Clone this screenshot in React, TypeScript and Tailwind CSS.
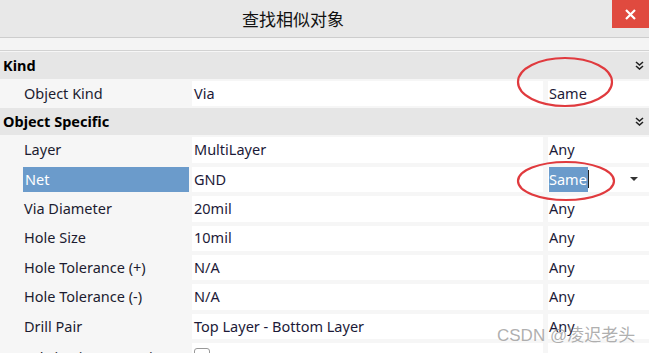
import React from "react";

type Row = { label: string; value: string; match: string; selected?: boolean };

const kindRows: Row[] = [{ label: "Object Kind", value: "Via", match: "Same" }];

const specificRows: Row[] = [
  { label: "Layer", value: "MultiLayer", match: "Any" },
  { label: "Net", value: "GND", match: "Same", selected: true },
  { label: "Via Diameter", value: "20mil", match: "Any" },
  { label: "Hole Size", value: "10mil", match: "Any" },
  { label: "Hole Tolerance (+)", value: "N/A", match: "Any" },
  { label: "Hole Tolerance (-)", value: "N/A", match: "Any" },
  { label: "Drill Pair", value: "Top Layer - Bottom Layer", match: "Any" },
];

const Chevrons = () => (
  <svg width="9" height="9" viewBox="0 0 9 9" className="text-[#222]">
    <path d="M1 1 L4.5 4 L8 1 M1 5 L4.5 8 L8 5" fill="none" stroke="currentColor" strokeWidth="1.6" />
  </svg>
);

const Header = ({ title }: { title: string }) => (
  <div className="flex h-[27px] items-center justify-between bg-[#e6e6e6] pl-[3px] pr-[5px]">
    <span className="text-[14.5px] font-bold text-black">{title}</span>
    <Chevrons />
  </div>
);

const PropRow = ({ row }: { row: Row }) => (
  <div className="flex h-[29.4px] items-stretch py-[2px]">
    <div className="flex w-[192px] items-center pl-[23px] pr-[3px]">
      {row.selected ? (
        <div className="flex h-full w-full items-center bg-[#6b9bcb] pl-[2px] text-white">{row.label}</div>
      ) : (
        <span className="pl-[1px] text-[#1c1c30]">{row.label}</span>
      )}
    </div>
    <div className="flex w-[351px] items-center bg-white pl-[2px] text-[#1c1a38]">{row.value}</div>
    <div className="ml-[5px] flex flex-1 items-center bg-white pl-[1px] text-[#1c1a38]">
      {row.selected ? (
        <>
          <span className="flex h-full items-center bg-[#6b9bcb] pr-[1px] text-white">{row.match}</span>
          <span className="h-[18px] w-[1px] bg-[#222]" />
          <svg width="10" height="6" viewBox="0 0 10 6" className="ml-auto mr-[10px]">
            <path d="M1 1 L9 1 L5 5 Z" fill="#333" />
          </svg>
        </>
      ) : (
        <span>{row.match}</span>
      )}
    </div>
  </div>
);

export default function App() {
  return (
    <div
      className="relative h-[353px] w-[649px] overflow-hidden bg-[#f6f6f6] text-[14.5px]"
      style={{ fontFamily: '"Noto Sans", "Noto Sans CJK SC", sans-serif' }}
    >
      {/* title bar */}
      <div className="relative flex h-[38px] items-center border-b border-[#cdcdcd] bg-[#e8e8e8] pl-[242px]">
        <span className="text-[17px] text-[#111]" style={{ fontFamily: '"Noto Sans CJK SC", sans-serif' }}>
          查找相似对象
        </span>
        <div className="absolute right-0 top-0 flex h-[28px] w-[37px] items-center justify-center bg-[#e04a3f]">
          <svg width="11" height="11" viewBox="0 0 11 11">
            <path d="M1 1 L10 10 M10 1 L1 10" stroke="white" strokeWidth="2.2" />
          </svg>
        </div>
      </div>
      <div className="h-[13px] border-b border-[#d2d2d2] bg-[#f4f4f4]" />

      {/* property grid */}
      <div className="pt-[1px]">
        <Header title="Kind" />
        {kindRows.map((r) => (
          <PropRow key={r.label} row={r} />
        ))}
        <Header title="Object Specific" />
        {specificRows.map((r) => (
          <PropRow key={r.label} row={r} />
        ))}
        <div className="flex h-[29px] items-stretch py-[2px]">
          <div className="flex w-[192px] items-start pl-[24px] pt-[4px] text-[#1c1c30] whitespace-nowrap">
            Fabrication Testpoint ...
          </div>
          <div className="flex w-[351px] items-start bg-white pl-[2px] pt-[5px]">
            <span className="h-[16px] w-[16px] rounded-[3px] border border-[#999] bg-white" />
          </div>
          <div className="ml-[5px] flex flex-1 items-start bg-white pl-[1px] pt-[4px] text-[#1c1a38]">Any</div>
        </div>
      </div>

      {/* red annotation ellipses */}
      <svg className="pointer-events-none absolute left-0 top-0" width="649" height="353">
        <ellipse cx="565" cy="82" rx="47" ry="24" fill="none" stroke="#e03a3e" strokeWidth="2.2" />
        <ellipse cx="566" cy="181" rx="48" ry="19" fill="none" stroke="#e03a3e" strokeWidth="2.2" />
      </svg>

      {/* watermark */}
      <div
        className="pointer-events-none absolute left-[497px] top-[323px] whitespace-nowrap text-[17px] text-[#9a9a9a]/80"
        style={{ fontFamily: '"Liberation Sans", "Noto Sans CJK SC", sans-serif' }}
      >
        CSDN @凌迟老头
      </div>
    </div>
  );
}
